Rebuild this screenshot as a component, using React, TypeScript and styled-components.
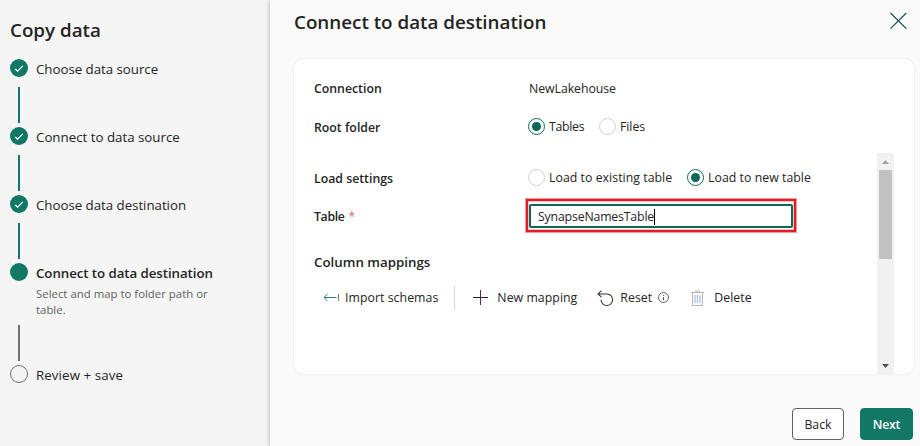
import React from "react";
import styled, { createGlobalStyle } from "styled-components";

const GlobalStyle = createGlobalStyle`
  * { box-sizing: border-box; }
  body {
    margin: 0;
    font-family: "Open Sans", "Noto Sans", sans-serif;
    font-size: 12.3px;
    line-height: 18px;
    color: #242424;
    background: #fafafa;
  }
`;

const Page = styled.div`
  display: flex;
  width: 100%;
  height: 446px;
  overflow: hidden;
`;

const Sidebar = styled.aside`
  width: 270px;
  flex: none;
  padding: 18px 10px 0;
  background: #f5f5f5;
`;

const SidebarTitle = styled.h1`
  margin: 0 0 17px;
  font-size: 18.8px;
  line-height: 24px;
  font-weight: 600;
`;

const StepItem = styled.div`
  display: flex;
  gap: 8px;
`;

const StepTrack = styled.div`
  display: flex;
  flex-direction: column;
  align-items: center;
  width: 18px;
  flex: none;
`;

const StepDot = styled.span<{ $state: "done" | "current" | "todo" }>`
  display: flex;
  align-items: center;
  justify-content: center;
  width: 18px;
  height: 18px;
  flex: none;
  border-radius: 50%;
  background: ${(p) => (p.$state === "todo" ? "transparent" : "#117865")};
  border: ${(p) => (p.$state === "todo" ? "1px solid #707070" : "none")};
`;

const StepLine = styled.span<{ $done: boolean }>`
  width: 2px;
  height: 36px;
  margin: auto 0 4px;
  background: ${(p) => (p.$done ? "#117865" : "#707070")};
`;

const StepBody = styled.div<{ $height: number }>`
  height: ${(p) => p.$height}px;
`;

const StepLabel = styled.div<{ $current?: boolean; $spacing: number }>`
  font-size: 13.3px;
  line-height: 20px;
  white-space: nowrap;
  font-weight: ${(p) => (p.$current ? 600 : 400)};
  letter-spacing: ${(p) => p.$spacing}px;
`;

const StepHint = styled.div`
  padding-top: 3px;
  width: 190px;
  font-size: 11.4px;
  line-height: 16px;
  color: #616161;
`;

const Main = styled.main`
  flex: 1;
  min-width: 0;
  display: flex;
  flex-direction: column;
  padding: 0 6px 0 24px;
  background: #fafafa;
  box-shadow: 0 0 5px rgba(0, 0, 0, 0.3);
`;

const Header = styled.header`
  display: flex;
  justify-content: space-between;
  align-items: flex-start;
  height: 59px;
  padding: 10px 7px 0 0;
`;

const Title = styled.h2`
  margin: 0;
  font-size: 18.8px;
  line-height: 24px;
  font-weight: 600;
`;

const CloseButton = styled.button`
  display: flex;
  margin-top: 2px;
  padding: 0;
  border: 0;
  background: none;
`;

const Card = styled.section`
  display: flex;
  flex-direction: column;
  height: 315px;
  padding: 10px 20px 0;
  border-radius: 9px;
  background: #fff;
  box-shadow: 0 0 2px rgba(0, 0, 0, 0.16);
`;

const Field = styled.div<{ $height: number }>`
  display: grid;
  grid-template-columns: 211px 1fr;
  align-items: center;
  height: ${(p) => p.$height}px;
`;

const FieldLabel = styled.label<{ $spacing?: number; $drop?: number }>`
  padding-top: ${(p) => p.$drop ?? 0}px;
  font-weight: 600;
  letter-spacing: ${(p) => p.$spacing ?? 0}px;
`;

const Required = styled.span`
  margin-left: 4px;
  color: #cf6a6f;
  font-weight: 400;
`;

const FieldText = styled.span`
  padding-left: 4px;
  letter-spacing: -0.05px;
`;

const Options = styled.div`
  display: flex;
  align-items: center;
  padding: 0 0 2px 3px;
`;

const Option = styled.label<{ $width: number; $spacing?: number }>`
  display: flex;
  align-items: center;
  gap: 4px;
  width: ${(p) => p.$width}px;
  white-space: nowrap;
  letter-spacing: ${(p) => p.$spacing ?? 0.04}px;
`;

const Radio = styled.span<{ $checked?: boolean }>`
  display: flex;
  align-items: center;
  justify-content: center;
  width: 17px;
  height: 17px;
  flex: none;
  border-radius: 50%;
  border: 1px solid ${(p) => (p.$checked ? "#0c695a" : "#d1d1d1")};
  &::after {
    content: "";
    width: 9px;
    height: 9px;
    border-radius: 50%;
    background: ${(p) => (p.$checked ? "#0c695a" : "transparent")};
  }
`;

const ScrollPane = styled.div`
  display: flex;
  height: 221px;
  margin-top: 6px;
`;

const ScrollContent = styled.div`
  flex: 1;
  min-width: 0;
  padding-top: 6px;
`;

const Highlight = styled.div`
  width: 272px;
  height: 35px;
  padding: 5px 3px 4px;
  border: 1px solid #f39a9e;
  background: #fff;
  box-shadow: inset 0 0 0 2px #e51c23, inset 0 0 0 3px #f8c4c6;
`;

const TextBox = styled.div`
  display: flex;
  align-items: center;
  height: 24px;
  padding: 1px 0 0 7px;
  border: 2px solid #0c695a;
  border-radius: 2px;
  letter-spacing: -0.17px;
`;

const Caret = styled.span`
  width: 1px;
  height: 16px;
  background: #000;
`;

const SectionTitle = styled.h3`
  margin: 19px 0 13px;
  font-size: 13.3px;
  line-height: 20px;
  font-weight: 600;
`;

const Toolbar = styled.div`
  display: flex;
  align-items: center;
  height: 26px;
  padding-left: 9px;
`;

const Tool = styled.button<{ $gap: number; $after?: number }>`
  display: flex;
  align-items: center;
  gap: ${(p) => p.$gap}px;
  margin: 0 ${(p) => p.$after ?? 0}px 0 0;
  padding: 0;
  border: 0;
  background: none;
  color: inherit;
  font: inherit;
  white-space: nowrap;
  letter-spacing: 0.05px;
  svg { flex: none; }
`;

const Separator = styled.span`
  width: 1px;
  height: 24px;
  margin-right: 18px;
  background: #d6d6d6;
`;

const ScrollTrack = styled.div`
  display: flex;
  flex-direction: column;
  align-items: center;
  width: 17px;
  background: #f1f1f1;
`;

const ScrollArrow = styled.span<{ $down?: boolean }>`
  display: flex;
  align-items: center;
  justify-content: center;
  height: 17px;
  margin-top: ${(p) => (p.$down ? "auto" : "0")};
`;

const ScrollThumb = styled.span`
  width: 13px;
  height: 89px;
  background: #c1c1c1;
`;

const Footer = styled.footer`
  display: flex;
  justify-content: flex-end;
  gap: 16px;
  padding: 34px 1px 0 0;
`;

const FooterButton = styled.button<{ $primary?: boolean }>`
  width: ${(p) => (p.$primary ? 53 : 52)}px;
  height: 32px;
  padding: 1px 0 0;
  border: 1px solid ${(p) => (p.$primary ? "#117865" : "#616161")};
  border-radius: 4px;
  background: ${(p) => (p.$primary ? "#117865" : "#fff")};
  color: ${(p) => (p.$primary ? "#fff" : "#242424")};
  font: inherit;
  font-weight: ${(p) => (p.$primary ? 600 : 400)};
  letter-spacing: ${(p) => (p.$primary ? -0.2 : 0)}px;
`;

const CheckIcon = () => (
  <svg width="10" height="8" viewBox="0 0 10 8" fill="none" stroke="#fff" strokeWidth="1.3">
    <path d="M1.2 4.9 3.6 7.1 8.8 1.9" />
  </svg>
);

const CloseIcon = () => (
  <svg width="17" height="17" viewBox="0 0 17 17" stroke="#1f4f4d" strokeWidth="1.2">
    <path d="M.5 1 16.3 16.6M16.3 1 .5 16.6" />
  </svg>
);

const ImportIcon = () => (
  <svg width="17" height="10" viewBox="0 0 17 10" fill="none">
    <path d="M1 4.5H13.5M4.6 1 1 4.5 4.6 8" stroke="#2b8371" />
    <path d="M15.5 1V8" stroke="#777" />
  </svg>
);

const PlusIcon = () => (
  <svg width="15" height="17" viewBox="0 0 15 17">
    <path d="M0 7.5H15" stroke="#242424" />
    <path d="M7.5 0V15" stroke="#5c2466" />
  </svg>
);

const ResetIcon = () => (
  <svg width="17" height="17" viewBox="0 0 17 17" fill="none" stroke="#333" strokeWidth="1.05">
    <path d="M4.5 .6 1 3.9 4.5 7.2M1 3.9H10a5.8 5.8 0 1 1-6 5.9" />
  </svg>
);

const InfoIcon = () => (
  <svg width="12" height="12" viewBox="0 0 12 12" fill="none" stroke="#555">
    <circle cx="5.5" cy="5.5" r="5" strokeWidth=".9" />
    <path d="M5.5 5V8.3M5.5 2.8V3.9" />
  </svg>
);

const TrashIcon = () => (
  <svg width="13" height="17" viewBox="0 0 13 17" fill="none" stroke="#b9b3b3">
    <path d="M4.5 2.5V1H8.5V2.5M0 2.5H13M1.5 2.5V15.5H11.5V2.5" />
    <path d="M4 5V13M6.5 5V13M9 5V13" stroke="#b7c9ea" strokeWidth="1.5" />
  </svg>
);

const steps = [
  { label: "Choose data source", spacing: -0.03 },
  { label: "Connect to data source", spacing: 0 },
  { label: "Choose data destination", spacing: -0.03 },
];

export default function App() {
  return (
    <>
      <GlobalStyle />
      <Page>
        <Sidebar>
          <SidebarTitle>Copy data</SidebarTitle>
          {steps.map((s) => (
            <StepItem key={s.label}>
              <StepTrack>
                <StepDot $state="done"><CheckIcon /></StepDot>
                <StepLine $done />
              </StepTrack>
              <StepBody $height={68}>
                <StepLabel $spacing={s.spacing}>{s.label}</StepLabel>
              </StepBody>
            </StepItem>
          ))}
          <StepItem>
            <StepTrack>
              <StepDot $state="current" />
              <StepLine $done={false} />
            </StepTrack>
            <StepBody $height={102}>
              <StepLabel $current $spacing={-0.07}>Connect to data destination</StepLabel>
              <StepHint>Select and map to folder path or table.</StepHint>
            </StepBody>
          </StepItem>
          <StepItem>
            <StepTrack><StepDot $state="todo" /></StepTrack>
            <StepLabel $spacing={0.1}>Review + save</StepLabel>
          </StepItem>
        </Sidebar>
        <Main>
          <Header>
            <Title>Connect to data destination</Title>
            <CloseButton aria-label="Close"><CloseIcon /></CloseButton>
          </Header>
          <Card>
            <Field $height={39}>
              <FieldLabel>Connection</FieldLabel>
              <FieldText>NewLakehouse</FieldText>
            </Field>
            <Field $height={39}>
              <FieldLabel>Root folder</FieldLabel>
              <Options>
                <Option $width={71} $spacing={-0.3}><Radio $checked />Tables</Option>
                <Option $width={60} $spacing={-0.05}><Radio />Files</Option>
              </Options>
            </Field>
            <ScrollPane>
              <ScrollContent>
                <Field $height={39}>
                  <FieldLabel>Load settings</FieldLabel>
                  <Options>
                    <Option $width={159}><Radio />Load to existing table</Option>
                    <Option $width={140}><Radio $checked />Load to new table</Option>
                  </Options>
                </Field>
                <Field $height={35}>
                  <FieldLabel $spacing={-0.35} $drop={2}>Table<Required>*</Required></FieldLabel>
                  <Highlight>
                    <TextBox>SynapseNamesTable<Caret /></TextBox>
                  </Highlight>
                </Field>
                <SectionTitle>Column mappings</SectionTitle>
                <Toolbar>
                  <Tool $gap={5} $after={16}><ImportIcon />Import schemas</Tool>
                  <Separator />
                  <Tool $gap={9} $after={20}><PlusIcon />New mapping</Tool>
                  <Tool $gap={6} $after={21}>
                    <ResetIcon />Reset
                    <InfoIcon />
                  </Tool>
                  <Tool $gap={10}><TrashIcon />Delete</Tool>
                </Toolbar>
              </ScrollContent>
              <ScrollTrack>
                <ScrollArrow>
                  <svg width="7" height="4" viewBox="0 0 7 4"><path d="M0 4 3.5 0 7 4Z" fill="#a3a3a3" /></svg>
                </ScrollArrow>
                <ScrollThumb />
                <ScrollArrow $down>
                  <svg width="7" height="4" viewBox="0 0 7 4"><path d="M0 0H7L3.5 4Z" fill="#505050" /></svg>
                </ScrollArrow>
              </ScrollTrack>
            </ScrollPane>
          </Card>
          <Footer>
            <FooterButton>Back</FooterButton>
            <FooterButton $primary>Next</FooterButton>
          </Footer>
        </Main>
      </Page>
    </>
  );
}
